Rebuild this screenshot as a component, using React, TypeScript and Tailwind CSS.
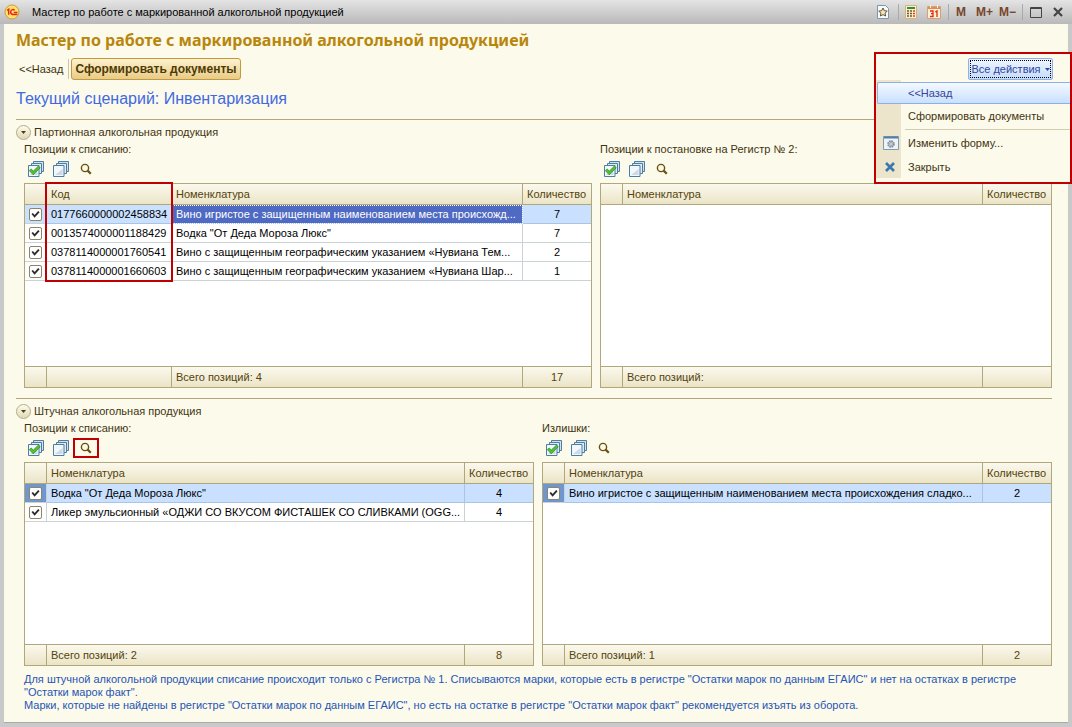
import React from "react";

type Row = { code?: string; name: string; qty: string };

const ruleColor = "border-[#b0a77a]";
const bandCell = "h-[21px] border-[#b0a77a] bg-linear-to-b from-[#fbf9ee] to-[#ebe4c6] p-0 px-1 text-left font-normal text-[#54430c] whitespace-nowrap";
const focusRing = "focus-visible:outline focus-visible:outline-1 focus-visible:outline-[#3f5dbd]";

function CheckAllIcon({ checked }: { checked: boolean }) {
  return (
    <svg width="16" height="16" viewBox="0 0 16 16" aria-hidden="true">
      <path d="M5.5.5h10v10h-10z" fill="#d3e3ee" stroke="#4d7ea2" />
      <path d="M3.500 2.500h10v10h-10z" fill="#dfebf4" stroke="#4d7ea2" />
      <path d="M.5 4.500h10.500v11H.5z" fill="#f3f7fb" stroke="#4d7ea2" />
      <path d="M2 14h7.500V8z" fill="#c9dae8" />
      {checked && (
        <path d="M1.300 9.600l1.900-1.500 2.100 2 5-4.900 1.900 1.500-7 7.100z" fill="#55c32c" stroke="#23851a" strokeWidth="0.700" />
      )}
    </svg>
  );
}

function FindIcon() {
  return (
    <svg width="12" height="12" viewBox="0 0 12 12" fill="none" stroke="#6b4f0c" aria-hidden="true">
      <circle cx="5" cy="5" r="3.600" strokeWidth="1.400" />
      <path d="M7.600 7.600L10.800 10.800" strokeWidth="2.200" />
    </svg>
  );
}

function Toolbar({ marked }: { marked?: boolean }) {
  return (
    <div className="-ml-px flex h-6 items-center" role="toolbar">
      <button aria-label="Установить флажки" className={`flex h-5 w-[25px] items-center justify-center ${focusRing}`}>
        <CheckAllIcon checked />
      </button>
      <button aria-label="Снять флажки" className={`flex h-5 w-[25px] items-center justify-center ${focusRing}`}>
        <CheckAllIcon checked={false} />
      </button>
      <button
        aria-label="Найти"
        className={`flex h-5 w-[26px] items-center justify-center border-2 pr-px ${marked ? "border-[#c00000]" : "border-transparent"} ${focusRing}`}
      >
        <FindIcon />
      </button>
    </div>
  );
}

type GoodsTableProps = { rows: Row[]; withCode?: boolean; total: string; count: string; active?: "cell" | "row"; compact?: boolean };

function GoodsTable({ rows, withCode, total, count, active, compact }: GoodsTableProps) {
  return (
    <div className={`border ${ruleColor} bg-white`}>
      <table className={`${compact ? "h-[202px]" : "h-[203px]"} w-full table-fixed border-separate border-spacing-0`}>
        <colgroup>
          <col className="w-[22px]" />
          {withCode && <col className="w-[125px]" />}
          <col />
          <col className="w-[68px]" />
        </colgroup>
        <thead>
          <tr>
            <th aria-label="Отметка" className={`${bandCell} border-r border-b`} />
            {withCode && <th className={`${bandCell} border-r border-b`}>Код</th>}
            <th className={`${bandCell} border-r border-b`}>Номенклатура</th>
            <th className={`${bandCell} border-b`}>Количество</th>
          </tr>
        </thead>
        <tbody className="text-black">
          {rows.map((r, i) => {
            const on = i === 0;
            const base = "h-[19px] p-0 px-1 border-b whitespace-nowrap overflow-hidden";
            const tone = on ? "bg-[#c9e1ff] border-[#a9c4e4]" : "border-[#c9d3d6]";
            const nameTone =
              on && active === "cell"
                ? "bg-[#4f6ac2] border-[#a9c4e4] text-white outline-1 -outline-offset-1 outline-dotted outline-white"
                : tone;
            return (
              <tr key={r.name}>
                <td className={`h-[19px] border-r border-b border-[#c9d3d6] p-0 ${on ? (active === "row" ? "bg-[#6f96cf]" : "bg-[#c9e1ff]") : ""}`}>
                  <label className="relative ml-1 flex size-[13px]">
                    <input
                      type="checkbox"
                      defaultChecked
                      aria-label={r.name}
                      className="peer size-[13px] appearance-none rounded-[2px] border border-[#8d8565] bg-white"
                    />
                    <svg className="pointer-events-none absolute top-0 left-0 hidden size-[13px] peer-checked:block" viewBox="0 0 13 13" fill="none" stroke="#2b2b2b" strokeWidth="1.900" aria-hidden="true">
                      <path d="M3.200 5.500L5.600 8.300L9.900 3.600" />
                    </svg>
                  </label>
                </td>
                {withCode && <td className={`${base} ${tone} border-r`}>{r.code}</td>}
                <td className={`${base} ${nameTone} border-r`}>{r.name}</td>
                <td className={`${base} ${tone} text-center`}>{r.qty}</td>
              </tr>
            );
          })}
          <tr aria-hidden="true">
            <td colSpan={withCode ? 4 : 3} className="h-auto p-0" />
          </tr>
        </tbody>
        <tfoot>
          <tr>
            <td className={`${bandCell} border-t border-r`} />
            {withCode && <td className={`${bandCell} border-t border-r`} />}
            <td className={`${bandCell} border-t border-r`}>Всего позиций: {total}</td>
            <td className={`${bandCell} border-t`}>
              <div className="text-center">{count}</div>
            </td>
          </tr>
        </tfoot>
      </table>
    </div>
  );
}

function Panel({ label, marked, children }: { label: string; marked?: boolean; children: React.ReactNode }) {
  return (
    <section aria-label={label} className="min-w-0">
      <h3 className="h-4 leading-4 whitespace-nowrap">{label}</h3>
      <div className="pb-[2px]">
        <Toolbar marked={marked} />
      </div>
      {children}
    </section>
  );
}

function Group({ title, children }: { title: string; children: React.ReactNode }) {
  return (
    <section className={`border-t ${ruleColor} pt-1`}>
      <h2 className="flex h-[17px] items-center gap-[3px]">
        <button
          aria-label={`Свернуть: ${title}`}
          className={`flex size-[15px] items-center justify-center rounded-full border border-[#b5ac86] bg-linear-to-b from-[#fdfbef] to-[#e0d8b6] ${focusRing}`}
        >
          <svg width="5" height="3" viewBox="0 0 5 3" aria-hidden="true">
            <path d="M0 0h5L2.500 3z" fill="#4d3e0a" />
          </svg>
        </button>
        {title}
      </h2>
      <div className="pl-2">{children}</div>
    </section>
  );
}

function TitleBar() {
  const sep = <span className="h-4 w-px bg-[#a9a9a9]" />;
  return (
    <header className="flex h-6 items-center bg-linear-to-b from-[#e4e4e4] to-[#b9b9b9] pr-2 pl-1 text-black">
      <svg width="16" height="16" viewBox="0 0 16 16" aria-hidden="true">
        <circle cx="8" cy="8" r="7" fill="#ffe169" stroke="#c79a52" />
        <path d="M3 6.500l1.700-1.200v5.400M10.500 6.500c-.6-1.400-3.800-1.400-3.800 1.500 0 2.100 1.500 2.400 2.500 2.400h4.300M9.800 8.400h3.700" fill="none" stroke="#e02a1a" strokeWidth="1.500" />
      </svg>
      <span className="grow pl-3 whitespace-nowrap">Мастер по работе с маркированной алкогольной продукцией</span>
      <div className="flex items-center text-[12px] font-bold text-[#77452a]">
        <button aria-label="Избранное" className={`mr-[9px] ${focusRing}`}>
          <svg width="12" height="14" viewBox="0 0 12 14" aria-hidden="true">
            <path d="M.5.5h8l3 3v10H.5z" fill="#f6fafc" stroke="#7f96a6" />
            <path d="M6 3l1.300 2.700 2.900.4-2.100 2 .5 2.900L6 9.600 3.400 11l.5-2.900-2.100-2 2.900-.4z" fill="#fbe5a6" stroke="#5b5440" />
          </svg>
        </button>
        {sep}
        <button aria-label="Калькулятор" className={`mr-[10px] ml-[6px] ${focusRing}`}>
          <svg width="12" height="14" viewBox="0 0 12 14" aria-hidden="true">
            <path d="M.5.5h11v13H.5z" fill="#fdeec4" stroke="#d6b283" />
            <path d="M2 2h8v2H2z" fill="#2f8f3f" />
            <path d="M2 6h2M5 6h2M2 8.500h2M5 8.500h2M2 11h2M5 11h2" stroke="#6a5a3c" strokeWidth="1.300" />
            <path d="M8 6h2M8 8.500h2M8 11h2" stroke="#d0472c" strokeWidth="1.300" />
          </svg>
        </button>
        <button aria-label="Календарь" className={`mr-[7px] ${focusRing}`}>
          <svg width="14" height="14" viewBox="0 0 14 14" aria-hidden="true">
            <path d="M.5 1.500h13v12H.5z" fill="#fdf0d2" stroke="#d3a077" />
            <path d="M1 2h12v2H1z" fill="#e38a56" />
            <path d="M3.500 0v3M10.500 0v3" stroke="#fff3dd" />
            <path d="M3 6h3v5.500H3M4 8.700h2M8.300 7L10 6v6" fill="none" stroke="#e02a12" strokeWidth="1.300" />
          </svg>
        </button>
        {sep}
        <button className={`w-6 ${focusRing}`}>M</button>
        <button className={`w-[23px] ${focusRing}`}>M+</button>
        <button className={`mr-[3px] w-[23px] ${focusRing}`}>M−</button>
        {sep}
        <button aria-label="Развернуть" className={`mr-[11px] ml-[7px] ${focusRing}`}>
          <svg width="12" height="11" viewBox="0 0 12 11" fill="none" stroke="#444" aria-hidden="true">
            <path d="M.5.500h11v10H.5zM0 1.500h12" />
          </svg>
        </button>
        <button aria-label="Закрыть окно" className={`mr-[1px] ${focusRing}`}>
          <svg width="10" height="10" viewBox="0 0 10 10" stroke="#444" strokeWidth="2.200" aria-hidden="true">
            <path d="M1 1l8 8M9 1L1 9" />
          </svg>
        </button>
      </div>
    </header>
  );
}

function ActionsMenu() {
  return (
    <div className="absolute top-[52px] right-0 flex w-[198px] flex-col border-2 border-[#c00000] bg-[#fcfaeb] pb-1">
      <div className="flex h-[26px] justify-end pt-1 pr-[17px]">
        <button
          aria-haspopup="menu"
          aria-expanded="true"
          className="flex h-[22px] w-[85px] items-center justify-center rounded-[2px] border border-[#8eb0ea] bg-linear-to-b from-[#eef5ff] to-[#c5dcfb] p-px text-[#33459c]"
        >
          <span className="flex h-full w-full items-center justify-center gap-1 whitespace-nowrap outline-1 -outline-offset-1 outline-dotted outline-black">
            Все действия
            <svg width="5" height="3" viewBox="0 0 5 3" aria-hidden="true">
              <path d="M0 0h5L2.500 3z" fill="#33459c" />
            </svg>
          </span>
        </button>
      </div>
      <div role="menu" className="flex flex-col bg-linear-to-r from-[#ece5cb] from-[25px] to-[#fcfaeb] to-[25px] pt-[2px]">
        <button role="menuitem" className="ml-px flex h-[22px] shrink-0 items-center rounded-l-[2px] border border-r-0 border-[#8eb0ea] bg-linear-to-b from-[#f4f9ff] to-[#c9e0fe] pl-[30px] text-[#33459c]">
          &lt;&lt;Назад
        </button>
        <button role="menuitem" className="flex h-[25px] items-center pl-8">Сформировать документы</button>
        <div role="separator" className="ml-[29px] h-px bg-[#d3ccb1]" />
        <button role="menuitem" className="flex h-[26px] items-center pl-[7px]">
          <span className="w-[25px]">
            <svg width="16" height="14" viewBox="0 0 16 14" aria-hidden="true">
              <path d="M.5.500h15v13H.5z" fill="#eef3f7" stroke="#7f9bb1" />
              <path d="M1 .5h14v2H1z" fill="#4f7ea6" />
              <circle cx="8" cy="8" r="3" fill="#c3cbd2" stroke="#7b8790" strokeWidth="1.500" strokeDasharray="1.600 .75" />
              <circle cx="8" cy="8" r="1.300" fill="#fff" stroke="#7b8790" strokeWidth=".7" />
            </svg>
          </span>
          Изменить форму...
        </button>
        <button role="menuitem" className="flex h-[22px] items-center pl-[9px]">
          <span className="w-[23px]">
            <svg width="10" height="10" viewBox="0 0 10 10" stroke="#3878ae" strokeWidth="2.600" aria-hidden="true">
              <path d="M1 1l8 8M9 1L1 9" />
            </svg>
          </span>
          Закрыть
        </button>
      </div>
    </div>
  );
}

const batchRows: Row[] = [
  { code: "0177660000002458834", name: "Вино игристое с защищенным наименованием места происхожд...", qty: "7" },
  { code: "0013574000001188429", name: "Водка \"От Деда Мороза Люкс\"", qty: "7" },
  { code: "0378114000001760541", name: "Вино с защищенным географическим указанием «Нувиана Тем...", qty: "2" },
  { code: "0378114000001660603", name: "Вино с защищенным географическим указанием «Нувиана Шар...", qty: "1" },
];
const pieceRows: Row[] = [
  { name: "Водка \"От Деда Мороза Люкс\"", qty: "4" },
  { name: "Ликер эмульсионный «ОДЖИ СО ВКУСОМ ФИСТАШЕК СО СЛИВКАМИ (OGG...", qty: "4" },
];
const surplusRows: Row[] = [{ name: "Вино игристое с защищенным наименованием места происхождения сладко...", qty: "2" }];

export default function App() {
  return (
    <div className="relative flex min-h-screen flex-col bg-[#c9c9c9] pb-1 font-['Liberation_Sans',Arial,sans-serif] text-[11px] leading-[13px] text-[#3f3410]">
      <TitleBar />
      <main className="mr-1 ml-1 grow border-b border-[#aaa] bg-[#fcfaeb] pr-4 pl-3">
        <h1 className="pt-1 font-['Noto_Sans',sans-serif] text-[16px] leading-6 font-bold whitespace-nowrap text-[#b8860b]">
          Мастер по работе с маркированной алкогольной продукцией
        </h1>
        <div className="mt-[6px] flex h-[22px] items-center">
          <button className={`px-[3px] ${focusRing}`}>&lt;&lt;Назад</button>
          <span className="mx-[2px] h-5 w-px bg-[#cbc5a5]" />
          <button className={`h-[22px] rounded-[3px] border border-[#c29a3e] bg-linear-to-b from-[#fdf1cf] to-[#e9cb85] px-[3px] text-[12px] font-bold text-[#4d3a04] ${focusRing}`}>
            Сформировать документы
          </button>
        </div>
        <p className="mt-[9px] mb-[10px] text-[16px] leading-5 text-[#4169e1]">Текущий сценарий: Инвентаризация</p>

        <Group title="Партионная алкогольная продукция">
          <div className="grid grid-cols-[minmax(0,568fr)_minmax(0,452fr)] gap-2">
            <Panel label="Позиции к списанию:">
              <div className="relative">
                <GoodsTable rows={batchRows} withCode total="4" count="17" active="cell" />
                <div className="pointer-events-none absolute -top-px left-[21px] h-[100px] w-[128px] border-2 border-[#c00000]" />
              </div>
            </Panel>
            <Panel label="Позиции к постановке на Регистр № 2:">
              <GoodsTable rows={[]} total="" count="" />
            </Panel>
          </div>
        </Group>

        <div className="h-[10px]" />

        <Group title="Штучная алкогольная продукция">
          <div className="grid grid-cols-2 gap-2">
            <Panel label="Позиции к списанию:" marked>
              <GoodsTable rows={pieceRows} total="2" count="8" active="row" compact />
            </Panel>
            <Panel label="Излишки:">
              <GoodsTable rows={surplusRows} total="1" count="2" active="row" compact />
            </Panel>
          </div>
        </Group>

        <div className="pt-[7px] pb-2 pl-2 text-[#1f55b5]">
          <p>
            Для штучной алкогольной продукции списание происходит только с Регистра № 1. Списываются марки, которые есть в регистре "Остатки марок по данным ЕГАИС" и нет на остатках в регистре "Остатки марок факт".
          </p>
          <p>Марки, которые не найдены в регистре "Остатки марок по данным ЕГАИС", но есть на остатке в регистре "Остатки марок факт" рекомендуется изъять из оборота.</p>
        </div>
      </main>
      <ActionsMenu />
    </div>
  );
}
